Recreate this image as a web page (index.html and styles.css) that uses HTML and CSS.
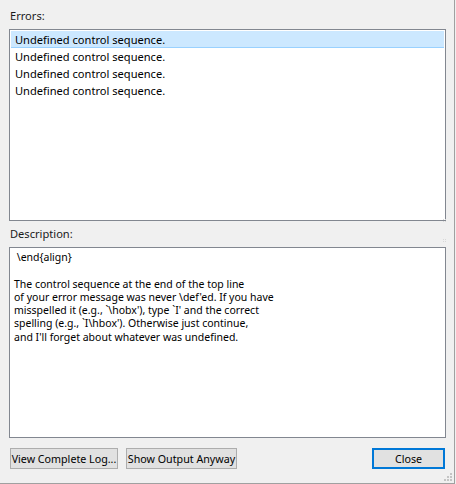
FILE: index.html
```html
<!DOCTYPE html>
<html>
<head>
<meta charset="utf-8">
<link rel="stylesheet" href="styles.css">
</head>
<body>
<div class="dialog">
  <div class="label label-errors">Errors:</div>
  <div class="list">
    <div class="row selected">Undefined control sequence.</div>
    <div class="row">Undefined control sequence.</div>
    <div class="row">Undefined control sequence.</div>
    <div class="row">Undefined control sequence.</div>
  </div>
  <div class="label label-desc">Description:</div>
  <div class="desc"><div class="line">&nbsp;\end{align}</div><div class="line">&nbsp;</div><div class="line">The control sequence at the end of the top line</div><div class="line">of your error message was never \def'ed. If you have</div><div class="line">misspelled it (e.g., `\hobx'), type `I' and the correct</div><div class="line">spelling (e.g., `I\hbox'). Otherwise just continue,</div><div class="line">and I'll forget about whatever was undefined.</div></div>
  <div class="buttons">
    <button class="btn btn-log">View Complete Log...</button>
    <button class="btn btn-show">Show Output Anyway</button>
    <span class="spacer"></span>
    <button class="btn btn-close">Close</button>
  </div>
  <svg class="grip-split" width="4" height="24" viewBox="0 0 4 24">
    <rect x="0" y="0" width="1" height="1" fill="#d8d8d8"/>
    <rect x="2" y="0" width="1" height="1" fill="#d8d8d8"/>
    <rect x="0" y="2" width="1" height="1" fill="#d8d8d8"/>
    <rect x="2" y="2" width="1" height="1" fill="#d8d8d8"/>
    <rect x="0" y="20" width="1" height="1" fill="#d8d8d8"/>
    <rect x="2" y="20" width="1" height="1" fill="#d8d8d8"/>
    <rect x="0" y="22" width="1" height="1" fill="#d8d8d8"/>
    <rect x="2" y="22" width="1" height="1" fill="#d8d8d8"/>
  </svg>
  <svg class="grip-size" width="8" height="8" viewBox="0 0 8 8">
    <rect x="6" y="0" width="2" height="2" fill="#c4c4c4"/>
    <rect x="3" y="3" width="2" height="2" fill="#c4c4c4"/>
    <rect x="6" y="3" width="2" height="2" fill="#c4c4c4"/>
    <rect x="0" y="6" width="2" height="2" fill="#c4c4c4"/>
    <rect x="3" y="6" width="2" height="2" fill="#c4c4c4"/>
    <rect x="6" y="6" width="2" height="2" fill="#c4c4c4"/>
  </svg>
</div>
</body>
</html>
```

FILE: styles.css
```css
html, body {
  margin: 0;
  padding: 0;
  background: #f0f0f0;
}

.dialog {
  position: relative;
  box-sizing: border-box;
  width: 455px;
  height: 484px;
  border-right: 1px solid #a0a0a0;
  border-bottom: 1px solid #a0a0a0;
  background: #f0f0f0;
  padding: 0 8px 0 9px;
  display: flex;
  flex-direction: column;
  font-family: "Noto Sans", "Open Sans", sans-serif;
  font-size: 11.1px;
  color: #000;
}

.label {
  height: 16px;
  line-height: 16px;
  padding-left: 1px;
  color: #1a1a1a;
}

.label-errors {
  margin-top: 8px;
  margin-bottom: 5px;
}

.list {
  box-sizing: border-box;
  height: 192px;
  background: #fff;
  border: 1px solid #828790;
  padding: 1px;
}

.row {
  height: 17px;
  line-height: 17px;
  padding-left: 4px;
  box-sizing: border-box;
  white-space: nowrap;
}

.row.selected {
  background: #cce8ff;
  border-bottom: 1px solid #99d1ff;
}

.label-desc {
  margin-top: 5px;
  margin-bottom: 5px;
}

.desc {
  box-sizing: border-box;
  height: 191px;
  background: #fff;
  border: 1px solid #828790;
  padding: 3px 4px 0 4px;
  font-size: 10.5px;
}

.line {
  height: 13.3px;
  line-height: 13.3px;
  white-space: pre;
}

.buttons {
  display: flex;
  align-items: flex-start;
  margin-top: 10px;
  padding-left: 1px;
}

.btn {
  box-sizing: border-box;
  height: 21px;
  margin: 0;
  padding: 0;
  background: #e1e1e1;
  border: 1px solid #adadad;
  font-family: "Noto Sans", "Open Sans", sans-serif;
  font-size: 10.7px;
  color: #000;
  line-height: 18px;
  white-space: nowrap;
}

.btn-log {
  width: 108px;
}

.btn-show {
  width: 111px;
  margin-left: 8px;
}

.spacer {
  flex: 1;
}

.btn-close {
  width: 73px;
  height: 21px;
  border: 2px solid #0078d7;
  margin-right: 1px;
}

.grip-split {
  position: absolute;
  left: 443px;
  top: 219px;
}

.grip-size {
  position: absolute;
  right: 2px;
  bottom: 2px;
}
```
